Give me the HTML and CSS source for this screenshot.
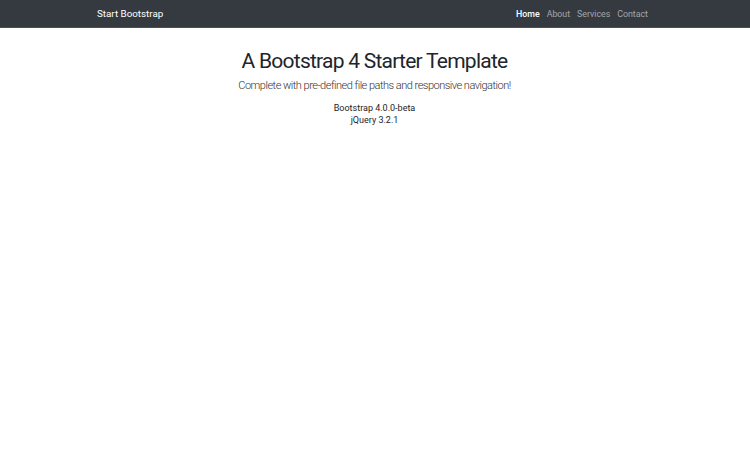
FILE: index.html
```html
<!DOCTYPE html>
<html lang="en">
<head>
<meta charset="utf-8">
<title>Bootstrap 4 Starter Template</title>
<link rel="stylesheet" href="styles.css">
</head>
<body>
<nav class="navbar">
  <div class="container nav-inner">
    <a class="brand" href="#">Start Bootstrap</a>
    <ul class="nav-links">
      <li><a class="active" href="#">Home</a></li>
      <li><a href="#">About</a></li>
      <li><a href="#">Services</a></li>
      <li><a href="#">Contact</a></li>
    </ul>
  </div>
</nav>
<main class="container hero">
  <h1 class="title">A Bootstrap 4 Starter Template</h1>
  <p class="lead">Complete with pre-defined file paths and responsive navigation!</p>
  <ul class="versions">
    <li>Bootstrap 4.0.0-beta</li>
    <li>jQuery 3.2.1</li>
  </ul>
</main>
</body>
</html>
```
FILE: styles.css
```css
* { box-sizing: border-box; }
html, body { margin: 0; padding: 0; background: #fff; }
body {
  font-family: Roboto, "Liberation Sans", Arial, sans-serif;
  color: #212529;
}
.container {
  width: 566px;
  margin: 0 auto;
  padding: 0 10px 0 5px;
}
.navbar {
  background: #343a40;
  height: 28px;
  border-bottom: 1px solid #4a5057;
}
.nav-inner {
  display: flex;
  align-items: center;
  justify-content: space-between;
  height: 27px;
}
.brand {
  color: #fff;
  text-decoration: none;
  font-size: 9.8px;
}
.nav-links {
  list-style: none;
  margin: 0;
  padding: 0;
  display: flex;
}
.nav-links a {
  display: block;
  padding: 0 3.5px;
  font-size: 8.8px;
  color: rgba(255,255,255,0.55);
  text-decoration: none;
}
.nav-links li:last-child a { padding-right: 0; }
.nav-links a.active { color: #fff; font-weight: 500; }
.hero {
  text-align: center;
  padding: 21px 5px 0 4px;
}
.title {
  margin: 0;
  font-size: 21px;
  font-weight: 400;
  line-height: 1.2;
  letter-spacing: -0.75px;
}
.lead {
  margin: 5px 0 10px;
  font-size: 11px;
  font-weight: 300;
  letter-spacing: -0.5px;
  color: #333;
}
.versions {
  list-style: none;
  margin: 0;
  padding: 0;
  font-size: 9px;
  font-weight: 400;
  line-height: 12px;
}
```
